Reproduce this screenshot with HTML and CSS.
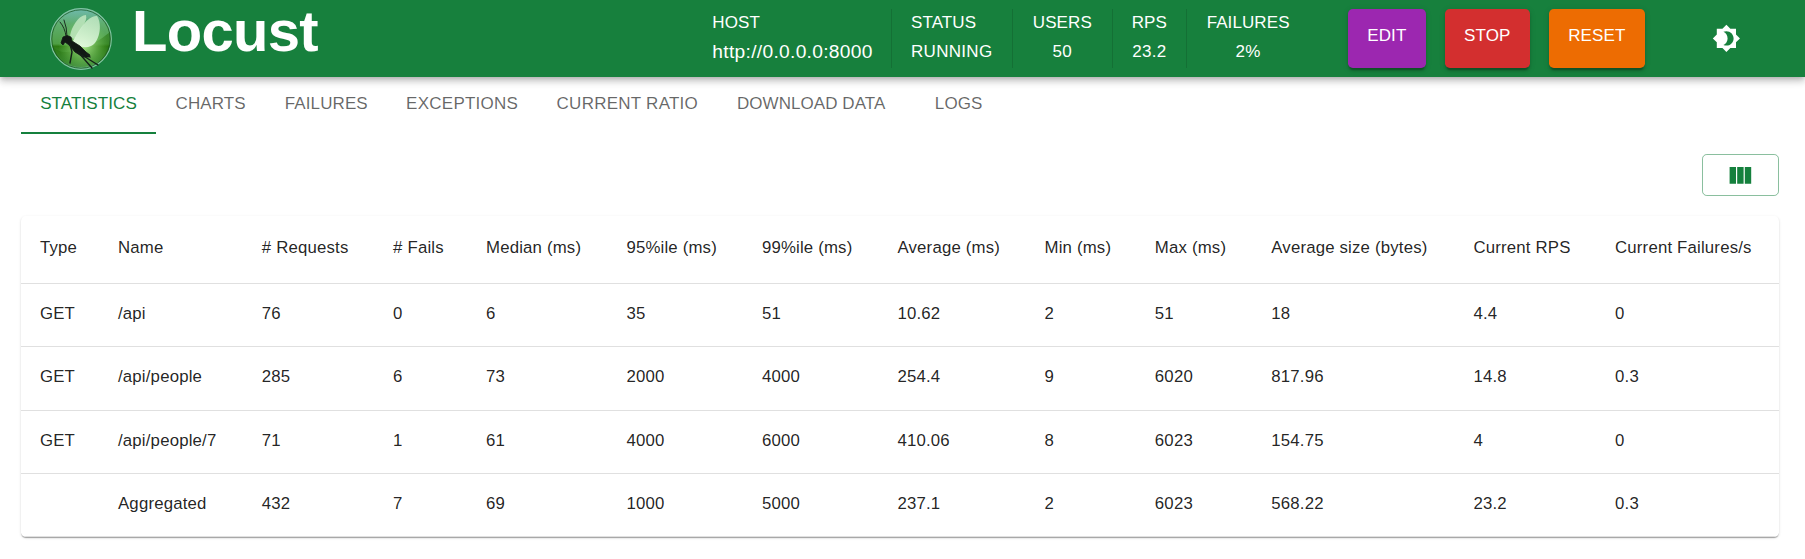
FILE: index.html
```html
<!DOCTYPE html>
<html lang="en">
<head>
<meta charset="utf-8">
<title>Locust</title>
<link rel="stylesheet" href="styles.css">
</head>
<body>
<header class="appbar">
  <div class="brand">
    <svg class="logo" viewBox="0 0 62 64">
      <defs>
        <linearGradient id="ball" x1="0" y1="0" x2="0" y2="1">
          <stop offset="0" stop-color="#6fb9b0"/>
          <stop offset=".25" stop-color="#5fae6e"/>
          <stop offset=".58" stop-color="#4f9f45"/>
          <stop offset=".62" stop-color="#2c7a12"/>
          <stop offset=".85" stop-color="#4f9f4c"/>
          <stop offset="1" stop-color="#6bb58c"/>
        </linearGradient>
        <radialGradient id="glow" cx=".54" cy=".6" r=".42">
          <stop offset="0" stop-color="#b5f09a" stop-opacity=".95"/>
          <stop offset="1" stop-color="#7fd060" stop-opacity="0"/>
        </radialGradient>
        <linearGradient id="wing" x1=".7" y1="0" x2=".3" y2="1">
          <stop offset="0" stop-color="#b9e3bd"/>
          <stop offset="1" stop-color="#e4fae0"/>
        </linearGradient>
      </defs>
      <circle cx="31" cy="32" r="30.5" fill="url(#ball)"/>
      <path d="M1 38Q10 49 28 43T60 25A30 30 0 0 1 50 54Q30 66 12 54Q3 48 1 38Z" fill="#267310" opacity=".55"/>
      <circle cx="31" cy="32" r="30" fill="url(#glow)"/>
      <circle cx="31" cy="32" r="30.3" fill="none" stroke="#80c3a3" stroke-width="1.2"/>
      <circle cx="31" cy="32" r="29.2" fill="none" stroke="#17551f" stroke-width="1" opacity=".75"/>
      <path d="M20 30C21 20 29 8 36 8C38 14 30 24 24 32Z" fill="#bfe6bf" opacity=".85"/>
      <path d="M23 34C29 23 38 8 47 9C53 18 49 36 41 39C34 42 27 39 23 34Z" fill="url(#wing)" opacity=".92"/>
      <path d="M11 36L13 30L17 28.5L21 30L22 34L30 39L36 45L40 48L39 50L33 50L25 45L19 38L15 35L13 38Z" fill="#111814" stroke="#111814" stroke-width=".8" stroke-linejoin="round"/>
      <g fill="none" stroke="#142019" stroke-linecap="round">
        <path d="M16 29Q15 21 10 15M17 29Q17 21 14 13" stroke-width=".9"/>
        <path d="M20 37L22 45L20 56M28 45L42 61M32 48L48 58M36 47L40 50" stroke-width="1.4"/>
      </g>
    </svg>
    <h1 class="title">Locust</h1>
  </div>
  <div class="stats">
    <div class="stat host"><span>HOST</span><span class="url">http://0.0.0.0:8000</span></div>
    <div class="stat status"><span>STATUS</span><span>RUNNING</span></div>
    <div class="stat users"><span>USERS</span><span>50</span></div>
    <div class="stat rps"><span>RPS</span><span>23.2</span></div>
    <div class="stat failures"><span>FAILURES</span><span>2%</span></div>
  </div>
  <div class="actions">
    <button class="btn edit">EDIT</button>
    <button class="btn stop">STOP</button>
    <button class="btn reset">RESET</button>
  </div>
  <svg class="icon theme" viewBox="0 0 24 24"><path fill="currentColor" d="M20 8.69V4h-4.69L12 .69 8.69 4H4v4.69L.69 12 4 15.31V20h4.69L12 23.31 15.31 20H20v-4.69L23.31 12 20 8.69zM12 18c-.89 0-1.74-.2-2.5-.55C11.56 16.5 13 14.42 13 12s-1.44-4.5-3.5-5.45C10.26 6.2 11.11 6 12 6c3.31 0 6 2.69 6 6s-2.69 6-6 6z"/></svg>
</header>
<nav class="tabs">
  <a class="tab t-statistics active">STATISTICS</a>
  <a class="tab t-charts">CHARTS</a>
  <a class="tab t-failures">FAILURES</a>
  <a class="tab t-exceptions">EXCEPTIONS</a>
  <a class="tab t-ratio">CURRENT RATIO</a>
  <a class="tab t-download">DOWNLOAD DATA</a>
  <a class="tab t-logs">LOGS</a>
</nav>
<main class="content">
  <div class="toolbar">
    <button class="columns"><svg class="icon" viewBox="0 0 24 24"><path fill="currentColor" d="M14.67 5v14H9.33V5h5.34zm1 14H21V5h-5.33v14zm-7.34 0V5H3v14h5.33z"/></svg></button>
  </div>
  <div class="paper">
    <table class="table">
      <colgroup><col class="c-type"><col class="c-name"><col class="c-req"><col class="c-fail"><col class="c-med"><col class="c-p95"><col class="c-p99"><col class="c-avg"><col class="c-min"><col class="c-max"><col class="c-size"><col class="c-rps"><col class="c-fps"></colgroup>
      <thead>
        <tr><th>Type</th><th>Name</th><th># Requests</th><th># Fails</th><th>Median (ms)</th><th>95%ile (ms)</th><th>99%ile (ms)</th><th>Average (ms)</th><th>Min (ms)</th><th>Max (ms)</th><th>Average size (bytes)</th><th>Current RPS</th><th>Current Failures/s</th></tr>
      </thead>
      <tbody>
        <tr><td>GET</td><td>/api</td><td>76</td><td>0</td><td>6</td><td>35</td><td>51</td><td>10.62</td><td>2</td><td>51</td><td>18</td><td>4.4</td><td>0</td></tr>
        <tr><td>GET</td><td>/api/people</td><td>285</td><td>6</td><td>73</td><td>2000</td><td>4000</td><td>254.4</td><td>9</td><td>6020</td><td>817.96</td><td>14.8</td><td>0.3</td></tr>
        <tr><td>GET</td><td>/api/people/7</td><td>71</td><td>1</td><td>61</td><td>4000</td><td>6000</td><td>410.06</td><td>8</td><td>6023</td><td>154.75</td><td>4</td><td>0</td></tr>
        <tr><td></td><td>Aggregated</td><td>432</td><td>7</td><td>69</td><td>1000</td><td>5000</td><td>237.1</td><td>2</td><td>6023</td><td>568.22</td><td>23.2</td><td>0.3</td></tr>
      </tbody>
    </table>
  </div>
</main>
</body>
</html>
```
FILE: styles.css
```css
* { box-sizing: border-box; }
html, body { height: 100%; }
body {
  margin: 0;
  overflow: hidden;
  background: #fff;
  color: rgba(0, 0, 0, .87);
  font-family: "Liberation Sans", Arial, sans-serif;
  font-size: 16.8px;
}
button { font: inherit; border: 0; }
.icon { display: block; width: 28.8px; height: 28.8px; }

.appbar {
  display: flex;
  align-items: center;
  height: 77px;
  padding: 0 64.4px 0 50px;
  background: #17803d;
  color: #fff;
  box-shadow: 0 2.4px 4.8px -1.2px rgba(0,0,0,.2), 0 4.8px 6px rgba(0,0,0,.14), 0 1.2px 12px rgba(0,0,0,.12);
}
.brand { display: flex; align-items: center; gap: 20px; }
.logo { display: block; width: 62px; height: 64px; }
.title { margin: 0; font-size: 58px; line-height: 67.2px; font-weight: 700; letter-spacing: -.7px; padding-bottom: 15px; }

.stats { display: flex; height: 59px; margin-left: auto; }
.stat {
  display: flex;
  flex: none;
  flex-direction: column;
  align-items: center;
  border-right: 1px solid rgba(0, 0, 0, .12);
  font-size: 17px;
  letter-spacing: .1px;
  line-height: 29.4px;
  white-space: nowrap;
}
.stat span { height: 29.4px; margin-top: -1px; }
.stat span + span { margin-top: 0; letter-spacing: .3px; }
.host, .status { align-items: flex-start; padding-left: 19.2px; }
.host { width: 198.7px; }
.status { width: 121px; }
.users { width: 100px; }
.rps { width: 74px; }
.failures { width: 122.6px; border-right: 0; }
.stat .url { font-size: 19.2px; }

.actions { display: flex; gap: 19px; margin-left: 38.4px; }
.btn {
  display: flex;
  align-items: flex-start;
  justify-content: center;
  height: 59px;
  padding: 12px 0;
  border-radius: 4.8px;
  color: #fff;
  font-size: 17px;
  line-height: 29.4px;
  letter-spacing: .1px;
  box-shadow: 0 3.6px 1.2px -2.4px rgba(0,0,0,.2), 0 2.4px 2.4px rgba(0,0,0,.14), 0 1.2px 6px rgba(0,0,0,.12);
}
.edit { width: 78px; background: #9c27b0; }
.stop { width: 85px; background: #d32f2f; }
.reset { width: 96px; background: #ed6c02; }
.theme { margin-left: 67px; }

.tabs { display: flex; height: 57px; padding-left: 21px; }
.tab {
  display: flex;
  flex: none;
  justify-content: center;
  padding-top: 16px;
  color: rgba(0, 0, 0, .6);
  font-size: 17px;
  line-height: 22px;
  letter-spacing: .1px;
  white-space: nowrap;
}
.active { color: #15803d; border-bottom: 2px solid #15803d; }
.t-statistics { width: 135px; }
.t-charts { width: 109.3px; }
.t-failures { width: 122px; }
.t-exceptions { width: 149.7px; letter-spacing: .25px; }
.t-ratio { width: 180.7px; letter-spacing: .25px; }
.t-download { width: 187px; letter-spacing: .05px; }
.t-logs { width: 108px; }

.content { padding: 20px 26px 0 21px; }
.toolbar { display: flex; justify-content: flex-end; }
.columns {
  display: flex;
  align-items: center;
  justify-content: center;
  width: 77px;
  height: 42px;
  border: 1px solid rgba(21, 128, 61, .5);
  border-radius: 4.8px;
  background: none;
  color: #15803d;
}
.paper {
  margin-top: 20px;
  border-radius: 4.8px;
  overflow: hidden;
  box-shadow: 0 2px 1px -1px rgba(0,0,0,.2), 0 1px 1px rgba(0,0,0,.14), 0 1px 3px rgba(0,0,0,.12);
}
.table { width: 1758px; table-layout: fixed; border-collapse: separate; border-spacing: 0; letter-spacing: .18px; }
.table th, .table td {
  height: 63px;
  padding: 0 0 2px 19px;
  border-bottom: 1px solid #e0e0e0;
  text-align: left;
  font-weight: 400;
  white-space: nowrap;
}
.table th { height: 68px; padding-bottom: 4px; }
.table tr:nth-child(2) td { height: 64px; padding-bottom: 4px; }
.c-type { width: 78px; }
.c-name { width: 143.8px; }
.c-req { width: 131.3px; }
.c-fail { width: 92.9px; }
.c-med { width: 140.4px; }
.c-p95 { width: 135.5px; }
.c-p99 { width: 135.6px; }
.c-avg { width: 147px; }
.c-min { width: 110.4px; }
.c-max { width: 116.4px; }
.c-size { width: 202.2px; }
.c-rps { width: 141.6px; }
.c-fps { width: 182.9px; }
```
